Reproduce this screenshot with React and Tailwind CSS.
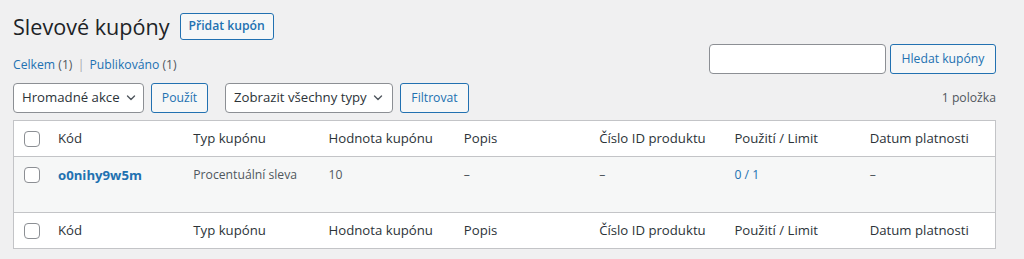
import React from "react";

const cols = ["Kód", "Typ kupónu", "Hodnota kupónu", "Popis", "Číslo ID produktu", "Použití / Limit", "Datum platnosti"];

function Check() {
  return <span className="block w-4 h-4 rounded-[4px] border border-[#8c8f94] bg-white" />;
}

function Chevron() {
  return (
    <svg width="14" height="14" viewBox="0 0 20 20" className="ml-1 text-[#50575e] shrink-0">
      <path d="M5 7l5 5 5-5" fill="none" stroke="currentColor" strokeWidth="2" strokeLinecap="round" strokeLinejoin="round" />
    </svg>
  );
}

function Select({ label, w }) {
  return (
    <div className={`${w} h-[30px] flex items-center justify-between pl-2 pr-2 bg-white border border-[#8c8f94] rounded-[4px] text-[13.2px] text-[#2c3338] whitespace-nowrap`}>
      <span>{label}</span>
      <Chevron />
    </div>
  );
}

function Btn({ children, w }) {
  return (
    <button className={`${w} h-[30px] flex items-center justify-center border border-[#2271b1] rounded-[3px] bg-[#f6f7f7] text-[12.2px] text-[#2271b1] whitespace-nowrap`}>
      {children}
    </button>
  );
}

function HeadRow({ top }) {
  return (
    <div className={`flex h-[36px] items-center ${top ? "border-b border-[#c3c4c7]" : "border-t border-[#c3c4c7]"}`}>
      <div className="w-[34px] pl-[10px] flex items-center"><Check /></div>
      {cols.map((c) => (
        <div key={c} className="w-[135.3px] px-[10px] text-[13.2px] text-[#2c3338] whitespace-nowrap">{c}</div>
      ))}
    </div>
  );
}

export default function App() {
  return (
    <div className="w-[1024px] h-[259px] bg-[#f0f0f1] flex overflow-hidden" style={{ fontFamily: '"Open Sans", "Noto Sans", sans-serif' }}>
      <div className="flex-1 pl-[13px] pr-[28px]">
        <div className="flex items-center pt-[13px]">
          <h1 className="text-[21.6px] leading-[27px] text-[#1d2327] font-normal">Slevové kupóny</h1>
          <button className="ml-[10px] h-[27px] w-[94px] border border-[#2271b1] rounded-[3px] bg-[#f6f7f7] text-[12.2px] font-semibold text-[#2271b1]">Přidat kupón</button>
        </div>
        <div className="flex justify-between">
          <div className="pt-[16px] text-[12.2px] text-[#50575e]">
            <span className="text-[#2271b1]">Celkem</span> (1) <span className="mx-[2px] text-[#a7aaad]">|</span> <span className="text-[#2271b1]">Publikováno</span> (1)
          </div>
          <div className="flex gap-[4px] pt-[4px]">
            <div className="w-[177px] h-[30px] bg-white border border-[#8c8f94] rounded-[4px]" />
            <Btn w="w-[106px]">Hledat kupóny</Btn>
          </div>
        </div>
        <div className="flex items-center pt-[9px]">
          <Select label="Hromadné akce" w="w-[131px]" />
          <div className="ml-[7px]"><Btn w="w-[57px]">Použít</Btn></div>
          <div className="ml-[17px]"><Select label="Zobrazit všechny typy" w="w-[168px]" /></div>
          <div className="ml-[7px]"><Btn w="w-[69px]">Filtrovat</Btn></div>
          <div className="flex-1 text-right text-[12.2px] text-[#50575e]">1 položka</div>
        </div>
        <div className="mt-[7px] w-[983px] bg-white border border-[#c3c4c7]">
          <HeadRow top />
          <div className="flex h-[55px] bg-[#f6f7f7] pt-[9px] text-[12.2px] text-[#50575e] whitespace-nowrap">
            <div className="w-[34px] pl-[10px] pt-[1px]"><Check /></div>
            <div className="w-[135.3px] px-[10px] text-[13.2px] font-bold text-[#2271b1] leading-[18px]">o0nihy9w5m</div>
            <div className="w-[135.3px] px-[10px] leading-[18px]">Procentuální sleva</div>
            <div className="w-[135.3px] px-[10px] leading-[18px]">10</div>
            <div className="w-[135.3px] px-[10px] leading-[18px]">–</div>
            <div className="w-[135.3px] px-[10px] leading-[18px]">–</div>
            <div className="w-[135.3px] px-[10px] leading-[18px] text-[#2271b1]">0 / 1</div>
            <div className="w-[135.3px] px-[10px] leading-[18px]">–</div>
          </div>
          <HeadRow />
        </div>
      </div>
      <div className="w-[7px] h-full bg-[#cdcdcd]" />
    </div>
  );
}
